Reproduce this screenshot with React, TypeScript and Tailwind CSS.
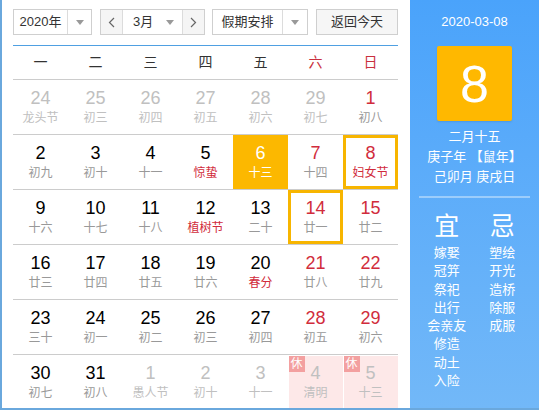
type Day = {
  n: number;
  l: string;
  muted?: boolean;
  red?: boolean;
  fest?: boolean;
  sel?: boolean;
  mark?: boolean;
  rest?: boolean;
};

const rows: Day[][] = [
  [
    { n: 24, l: "龙头节", muted: true },
    { n: 25, l: "初三", muted: true },
    { n: 26, l: "初四", muted: true },
    { n: 27, l: "初五", muted: true },
    { n: 28, l: "初六", muted: true },
    { n: 29, l: "初七", muted: true },
    { n: 1, l: "初八", red: true },
  ],
  [
    { n: 2, l: "初九" },
    { n: 3, l: "初十" },
    { n: 4, l: "十一" },
    { n: 5, l: "惊蛰", fest: true },
    { n: 6, l: "十三", sel: true },
    { n: 7, l: "十四", red: true },
    { n: 8, l: "妇女节", red: true, fest: true, mark: true },
  ],
  [
    { n: 9, l: "十六" },
    { n: 10, l: "十七" },
    { n: 11, l: "十八" },
    { n: 12, l: "植树节", fest: true },
    { n: 13, l: "二十" },
    { n: 14, l: "廿一", red: true, mark: true },
    { n: 15, l: "廿二", red: true },
  ],
  [
    { n: 16, l: "廿三" },
    { n: 17, l: "廿四" },
    { n: 18, l: "廿五" },
    { n: 19, l: "廿六" },
    { n: 20, l: "春分", fest: true },
    { n: 21, l: "廿八", red: true },
    { n: 22, l: "廿九", red: true },
  ],
  [
    { n: 23, l: "三十" },
    { n: 24, l: "初一" },
    { n: 25, l: "初二" },
    { n: 26, l: "初三" },
    { n: 27, l: "初四" },
    { n: 28, l: "初五", red: true },
    { n: 29, l: "初六", red: true },
  ],
  [
    { n: 30, l: "初七" },
    { n: 31, l: "初八" },
    { n: 1, l: "愚人节", muted: true },
    { n: 2, l: "初十", muted: true },
    { n: 3, l: "十一", muted: true },
    { n: 4, l: "清明", muted: true, rest: true },
    { n: 5, l: "十三", muted: true, rest: true },
  ],
];

const weekdays = ["一", "二", "三", "四", "五", "六", "日"];
const yi = ["嫁娶", "冠笄", "祭祀", "出行", "会亲友", "修造", "动土", "入险"];
const ji = ["塑绘", "开光", "造桥", "除服", "成服"];

const font = { fontFamily: '"Liberation Sans", "Noto Sans CJK SC", sans-serif' };

function Caret() {
  return (
    <svg width="8" height="5" viewBox="0 0 8 5" className="fill-[#999]">
      <path d="M0 0h8L4 5z" />
    </svg>
  );
}

function Cell({ d }: { d: Day }) {
  let numCls = "text-black";
  let lunCls = "text-[#999]";
  if (d.muted) {
    numCls = "text-[#c0c0c0]";
    lunCls = "text-[#c0c0c0]";
  } else if (d.red) {
    numCls = "text-[#d12c3c]";
  }
  if (d.fest && !d.muted) lunCls = "text-[#d12c3c]";
  let box = "";
  if (d.sel) {
    box = "bg-[#fcb800]";
    numCls = "text-white";
    lunCls = "text-white";
  }
  if (d.mark) box = "border-[3px] border-[#f7b500]";
  if (d.rest) box = "bg-[#fde8e8] mx-[0.5px]";
  return (
    <div className={`relative flex h-full flex-col items-center justify-center ${box}`}>
      {d.rest && (
        <span className="absolute left-0 top-0 flex h-[16px] w-[16px] items-center justify-center bg-[#f3a0a0] text-[12px] leading-none text-white">
          休
        </span>
      )}
      <span className={`text-[18px] leading-[22px] ${numCls}`}>{d.n}</span>
      <span className={`text-[12px] leading-[18px] ${lunCls}`}>{d.l}</span>
    </div>
  );
}

export default function App() {
  return (
    <div className="flex h-[410px] w-[539px] border-b-2 border-l-2 border-[#6aa8dd] bg-white" style={font}>
      <div className="flex w-[408px] flex-col pl-[11px] pr-[12px] pt-[9px]">
        <div className="flex h-[26px] items-stretch text-[13px] text-[#333]">
          <div className="flex w-[79px] border border-[#cfcfcf] bg-white">
            <span className="flex flex-1 items-center justify-center">2020年</span>
            <span className="flex w-[24px] items-center justify-center border-l border-[#dcdcdc]">
              <Caret />
            </span>
          </div>
          <div className="ml-[8px] flex w-[105px] border border-[#cfcfcf] bg-white">
            <span className="flex w-[22px] items-center justify-center border-r border-[#dcdcdc] bg-[#f5f5f5] text-[#666]">
              <svg width="7" height="11" viewBox="0 0 7 11" className="fill-none stroke-[#666]">
                <path d="M6 1L1.5 5.5 6 10" strokeWidth="1.2" />
              </svg>
            </span>
            <span className="flex flex-1 items-center justify-between pl-[10px] pr-[8px]">
              3月
              <Caret />
            </span>
            <span className="flex w-[22px] items-center justify-center border-l border-[#dcdcdc] bg-[#f5f5f5]">
              <svg width="7" height="11" viewBox="0 0 7 11" className="fill-none stroke-[#666]">
                <path d="M1 1l4.5 4.5L1 10" strokeWidth="1.2" />
              </svg>
            </span>
          </div>
          <div className="ml-[7px] flex w-[96px] border border-[#cfcfcf] bg-white">
            <span className="flex flex-1 items-center justify-center">假期安排</span>
            <span className="flex w-[25px] items-center justify-center border-l border-[#dcdcdc]">
              <Caret />
            </span>
          </div>
          <div className="ml-[8px] flex flex-1 items-center justify-center border border-[#cfcfcf] bg-[#f6f6f6]">
            返回今天
          </div>
        </div>
        <div className="mt-[10px] grid h-[35px] grid-cols-7 border-y border-t-[#4fa0e2] border-b-[#cccccc] text-[14px]">
          {weekdays.map((w, i) => (
            <div key={w} className={`flex items-center justify-center ${i >= 5 ? "text-[#c9303e]" : "text-[#333]"}`}>
              {w}
            </div>
          ))}
        </div>
        {rows.map((r, i) => (
          <div
            key={i}
            className={`grid grid-cols-7 ${i < 5 ? "h-[55px] border-b border-[#cccccc]" : "h-[53px] pt-[1px]"}`}
          >
            {r.map((d, j) => (
              <Cell key={j} d={d} />
            ))}
          </div>
        ))}
      </div>
      <div className="flex flex-1 flex-col items-center bg-gradient-to-b from-[#4aa3fb] to-[#72b8f8] text-white">
        <div className="mt-[13px] text-[13px] leading-[18px]">2020-03-08</div>
        <div className="mt-[15px] flex h-[75px] w-[75px] items-center justify-center rounded-[2px] bg-[#ffb800] text-[52px] leading-none shadow-[0_1px_2px_rgba(0,0,0,0.1)]">
          8
        </div>
        <div className="mt-[6px] text-[13px] leading-[20px]">二月十五</div>
        <div className="text-[13px] leading-[20px]">庚子年 【鼠年】</div>
        <div className="text-[13px] leading-[20px]">己卯月 庚戌日</div>
        <div className="mt-[9px] h-[2px] w-[111px] bg-[#9ccdfb]" />
        <div className="mt-[12px] flex w-[111px] justify-around">
          <div className="flex w-[56px] flex-col items-center">
            <div className="text-[25px] leading-[32px]">宜</div>
            <div className="mt-[2px] flex flex-col items-center text-[13px] leading-[18.3px]">
              {yi.map((t) => (
                <span key={t}>{t}</span>
              ))}
            </div>
          </div>
          <div className="flex w-[56px] flex-col items-center">
            <div className="text-[25px] leading-[32px]">忌</div>
            <div className="mt-[2px] flex flex-col items-center text-[13px] leading-[18.3px]">
              {ji.map((t) => (
                <span key={t}>{t}</span>
              ))}
            </div>
          </div>
        </div>
      </div>
    </div>
  );
}
